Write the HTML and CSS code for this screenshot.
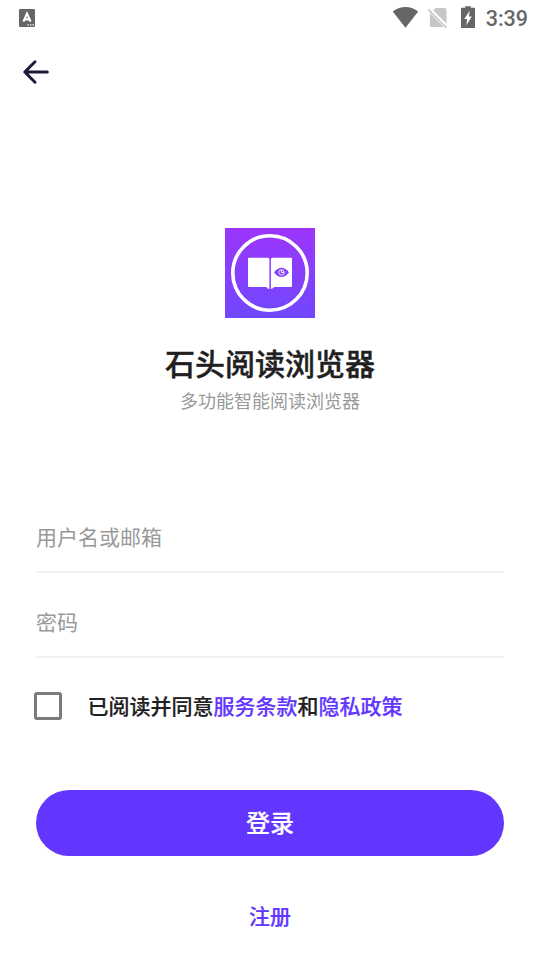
FILE: index.html
```html
<!DOCTYPE html>
<html lang="zh-CN">
<head>
<meta charset="utf-8">
<title>登录</title>
<link rel="stylesheet" href="styles.css">
</head>
<body>
<div class="status">
  <svg class="status-input" width="16" height="18" viewBox="0 0 16 18">
    <rect width="16" height="18" rx="1.2" fill="#666"/>
    <path d="M4.400 12.600 8 4.600l3.600 8M5.600 10.400h4.800" fill="none" stroke="#fff" stroke-width="2.100"/>
    <path d="M8.400 15.900h1.400M11 15.900h1.400M13.500 15.900h1.400" stroke="#fff" stroke-width="1.300"/>
  </svg>
  <svg class="status-icons" width="84" height="36" viewBox="0 0 84 36">
    <path d="M.7 11.500Q13.500 2.600 26.200 11.500L13.500 27.700Z" fill="#666"/>
    <path d="M43.500 8H52.500Q54.500 8 54.500 10V23.800L41.200 10.300ZM37.900 12.900 51.800 27H39.500Q37.900 27 37.900 25.400Z" fill="#c6c6c6"/>
    <path d="M36.200 9.300 54.300 27.400" stroke="#c6c6c6" stroke-width="1.700"/>
    <path d="M40.400 11.200 53.300 24.100" stroke="#fff" stroke-width="1.600"/>
    <path d="M70.200 7.800h3V6.200h5.600v1.600H83V28H69V7.800Z" fill="#666"/>
    <path d="M77.800 10.800 72.200 19h2.800l-.6 6.200 5.400-8.600h-2.900Z" fill="#fff"/>
  </svg>
  <span class="clock">3:39</span>
</div>
<header class="header">
  <svg width="28" height="26" viewBox="0 0 28 26" fill="none" stroke="#1e1839" stroke-width="3" stroke-linecap="round" stroke-linejoin="round">
    <path d="M25.300 13H2.800M13 2.800 2.800 13 13 23.200"/>
  </svg>
</header>
<main class="main">
  <section class="brand">
    <svg class="logo" width="90" height="90" viewBox="0 0 90 90">
      <defs><linearGradient id="g" x1="0" y1="0" x2="0" y2="1"><stop offset="0" stop-color="#9c35fb"/><stop offset="1" stop-color="#7048ff"/></linearGradient></defs>
      <rect width="90" height="90" fill="url(#g)"/>
      <circle cx="45" cy="45" r="37.200" fill="none" stroke="#fff" stroke-width="3.600"/>
      <path d="M24 29.700H43Q44.400 29.700 44.400 31.200V61Q42 61 41.500 59H24Q23 59 23 58V30.700Q23 29.700 24 29.700ZM47.300 29.700H66Q67 29.700 67 30.700V58Q67 59 66 59H49Q48.500 60.500 45.900 61V31.200Q45.900 29.700 47.300 29.700Z" fill="#fff"/>
      <path d="M49 44.400Q56.500 35.300 64 44.400Q56.500 53.500 49 44.400Z" fill="#8540fd"/>
      <circle cx="56.500" cy="44.400" r="2.700" fill="#8540fd" stroke="#fff" stroke-width=".9"/>
      <path d="M56.400 42.200v2.300h2.200" fill="none" stroke="#fff" stroke-width=".9"/>
    </svg>
    <h1 class="title">石头阅读浏览器</h1>
    <p class="subtitle">多功能智能阅读浏览器</p>
  </section>
  <form class="form">
    <div class="field">用户名或邮箱</div>
    <div class="field">密码</div>
    <div class="agree">
      <span class="box"></span>
      <span class="agree-text">已阅读并同意<a class="link">服务条款</a>和<a class="link">隐私政策</a></span>
    </div>
    <button class="login" type="button">登录</button>
    <a class="register">注册</a>
  </form>
</main>
</body>
</html>
```
FILE: styles.css
```css
* { box-sizing: border-box; }
body {
  margin: 0;
  width: 540px;
  height: 960px;
  overflow: hidden;
  background: #fff;
  color: #202020;
  font-family: "Noto Sans CJK SC", sans-serif;
}
svg { display: block; flex: none; }
.status {
  display: flex;
  align-items: center;
  height: 36px;
  padding: 0 12px 0 19px;
}
.status-icons { margin-left: auto; }
.clock {
  margin-left: 10px;
  color: #666;
  font: 500 21.5px/36px Roboto, sans-serif;
  padding-top: 2px;
}
.header {
  display: flex;
  align-items: center;
  height: 72px;
  padding-left: 22px;
}
.main { padding: 120px 36px 0; }
.brand {
  display: flex;
  flex-direction: column;
  align-items: center;
}
.title {
  margin: 21px 0 0;
  font-size: 30px;
  font-weight: 500;
  line-height: 46px;
  -webkit-text-stroke: 0.4px currentColor;
}
.subtitle {
  margin: 2px 0 0;
  color: #999;
  font-size: 18px;
  line-height: 26px;
}
.form {
  display: flex;
  flex-direction: column;
  margin-top: 91px;
}
.field {
  height: 69px;
  border-bottom: 2px solid #f1f1f1;
  color: #999;
  font-size: 21px;
  line-height: 65px;
}
.field + .field { margin-top: 16px; }
.agree {
  display: flex;
  align-items: center;
  gap: 25.5px;
  height: 60px;
  margin: 18px 0 0 -2px;
  font-size: 21px;
  font-weight: 500;
}
.agree-text {
  padding-bottom: 2px;
  -webkit-text-stroke: 0.2px currentColor;
}
.box {
  width: 28px;
  height: 28px;
  border: 3px solid #7a7a7a;
  border-radius: 3px;
}
.link, .register { color: #6236ff; }
.login {
  height: 66px;
  margin-top: 54px;
  padding: 0 0 2px;
  border: 0;
  border-radius: 33px;
  background: #6236ff;
  color: #fff;
  font: 500 24px/64px "Noto Sans CJK SC", sans-serif;
  -webkit-text-stroke: 0.2px currentColor;
}
.register {
  margin-top: 43px;
  font-size: 21px;
  font-weight: 500;
  line-height: 32px;
  text-align: center;
  -webkit-text-stroke: 0.2px currentColor;
}
```
